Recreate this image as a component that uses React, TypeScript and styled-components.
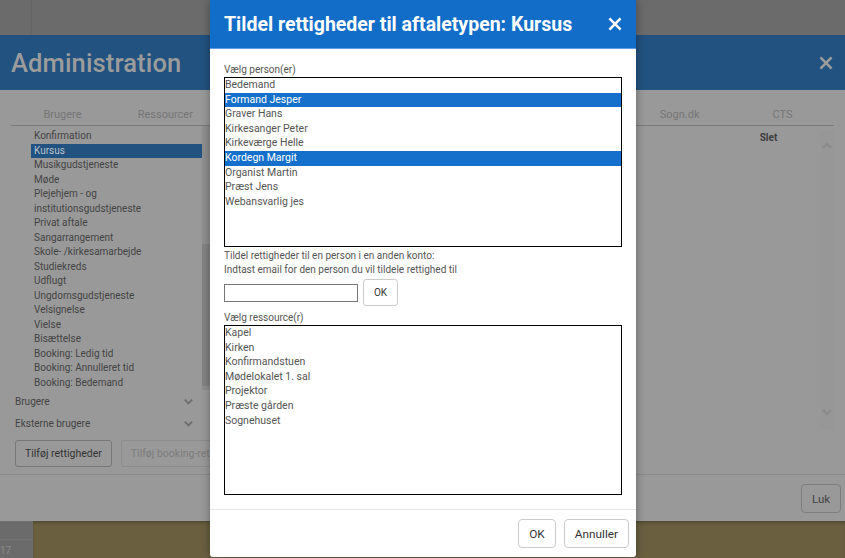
import React from "react";
import styled, { createGlobalStyle } from "styled-components";

const GlobalStyle = createGlobalStyle`
  html, body { margin: 0; padding: 0; }
  body {
    font-family: Roboto, "Liberation Sans", Arial, sans-serif;
    background: #6b6b6b;
  }
  * { box-sizing: border-box; }
`;

const S = {
  Page: styled.div`
    position: relative;
    width: 845px;
    height: 558px;
    overflow: hidden;
    display: flex;
    flex-direction: column;
    background: #6b6b6b;
  `,
  TopBar: styled.div`
    height: 35px;
    flex: none;
    display: flex;
  `,
  TopCell: styled.div`
    width: 32px;
    border-right: 1px solid #656565;
  `,
  Admin: styled.section`
    height: 486px;
    flex: none;
    display: flex;
    flex-direction: column;
    background: #999999;
  `,
  AdminHeader: styled.header`
    height: 55px;
    flex: none;
    display: flex;
    align-items: center;
    justify-content: space-between;
    padding: 0 12px 0 11px;
    background: #22527f;
  `,
  AdminTitle: styled.h1`
    margin: 0;
    font-size: 25.5px;
    font-weight: 500;
    color: #9c9c9c;
    letter-spacing: 0.15px;
  `,
  AdminBody: styled.div`
    flex: 1;
    display: flex;
    flex-direction: column;
    padding: 15px 11px 0;
  `,
  Tabs: styled.nav`
    display: grid;
    grid-template-columns: repeat(8, 1fr);
    height: 21px;
    border-bottom: 1px solid #7a7a7a;
  `,
  Tab: styled.div`
    text-align: center;
    font-size: 11px;
    line-height: 20px;
    color: #767676;
  `,
  Content: styled.div`
    display: flex;
    height: 308px;
  `,
  TypeColumn: styled.div`
    width: 199px;
    display: flex;
    flex-direction: column;
  `,
  TypeScroll: styled.div`
    display: flex;
    height: 266px;
  `,
  TypeList: styled.ul`
    list-style: none;
    margin: 0;
    padding: 3px 0 0 20px;
    flex: 1;
    overflow: hidden;
  `,
  TypeItem: styled.li<{ $active?: boolean }>`
    font-size: 10px;
    line-height: 14.5px;
    padding-left: 3px;
    color: ${(p) => (p.$active ? "#b9c3cd" : "#444")};
    background: ${(p) => (p.$active ? "#22527f" : "transparent")};
    white-space: nowrap;
  `,
  ScrollTrack: styled.div`
    width: 8px;
    background: #8f8f8f;
    display: flex;
    flex-direction: column;
    padding-top: 118px;
  `,
  ScrollThumb: styled.div`
    height: 142px;
    background: #848484;
  `,
  Group: styled.div`
    display: flex;
    align-items: center;
    justify-content: space-between;
    height: 22px;
    padding: 0 16px 0 4px;
    font-size: 10px;
    color: #444;
  `,
  RightArea: styled.div`
    flex: 1;
    display: flex;
    justify-content: flex-end;
    padding-top: 4px;
  `,
  SletCol: styled.div`
    width: 103px;
    text-align: center;
    font-size: 10px;
    font-weight: 700;
    color: #3d3d3d;
    padding-top: 2px;
  `,
  SideScroll: styled.div`
    width: 14px;
    height: 300px;
    background: #979797;
    display: flex;
    flex-direction: column;
    justify-content: space-between;
    align-items: center;
    padding: 10px 0 12px;
    color: #888;
  `,
  ButtonRow: styled.div`
    display: flex;
    gap: 9px;
    padding: 6px 0 0 4px;
    height: 40px;
  `,
  GhostButton: styled.button<{ $disabled?: boolean }>`
    height: 27px;
    padding: 0 9px;
    font-family: inherit;
    font-size: 10.5px;
    border-radius: 3px;
    background: #999;
    color: ${(p) => (p.$disabled ? "#7c7c7c" : "#333")};
    border: 1px solid ${(p) => (p.$disabled ? "#8c8c8c" : "#777")};
    white-space: nowrap;
  `,
  AdminFooter: styled.footer`
    border-top: 1px solid #8a8a8a;
    display: flex;
    justify-content: flex-end;
    padding: 9px 4px 0 0;
    flex: 1;
  `,
  LukButton: styled.button`
    width: 40px;
    height: 29px;
    font-family: inherit;
    font-size: 11.5px;
    color: #444;
    background: #999;
    border: 1px solid #7e7e7e;
    border-radius: 4px;
  `,
  Bottom: styled.div`
    flex: 1;
    display: flex;
  `,
  DayCell: styled.div`
    width: 33px;
    background: #6b6b6b;
    border-top: 1px solid #707070;
    display: flex;
    flex-direction: column;
    justify-content: flex-end;
  `,
  DayNum: styled.div`
    border-top: 1px solid #747474;
    height: 19px;
    font-size: 10px;
    color: #8a8a8a;
    padding-top: 5px;
  `,
  Olive: styled.div`
    flex: 1;
    background: #6a6040;
    box-shadow: inset 0 3px 4px -2px rgba(0, 0, 0, 0.35);
  `,
  Dialog: styled.div`
    position: absolute;
    left: 210px;
    top: 0;
    width: 426px;
    height: 557px;
    background: #fff;
    display: flex;
    flex-direction: column;
    box-shadow: 0 0 10px rgba(0, 0, 0, 0.35);
    border-radius: 0 0 3px 3px;
  `,
  DialogHeader: styled.header`
    height: 49px;
    flex: none;
    background: #126dc8;
    border-bottom: 1px solid #5f9be0;
    display: flex;
    align-items: center;
    justify-content: space-between;
    padding: 0 14px 0 14px;
  `,
  DialogTitle: styled.h2`
    margin: 0;
    font-size: 19.5px;
    font-weight: 700;
    color: #fff;
  `,
  DialogBody: styled.div`
    flex: 1;
    padding: 14px 14px 0;
    display: flex;
    flex-direction: column;
  `,
  Label: styled.div`
    font-size: 10px;
    line-height: 14px;
    color: #555;
  `,
  ListBox: styled.ul`
    list-style: none;
    margin: 0;
    padding: 0;
    width: 398px;
    height: 170px;
    border: 1px solid #000;
    overflow: hidden;
  `,
  Option: styled.li<{ $selected?: boolean }>`
    height: 14.6px;
    line-height: 14.6px;
    font-size: 10.5px;
    color: ${(p) => (p.$selected ? "#fff" : "#555")};
    background: ${(p) => (p.$selected ? "#1470ca" : "transparent")};
    white-space: nowrap;
    overflow: hidden;
  `,
  Hint: styled.div`
    font-size: 10px;
    line-height: 13.5px;
    color: #555;
    margin-top: 2px;
  `,
  EmailRow: styled.div`
    display: flex;
    align-items: center;
    gap: 5px;
    margin: 3px 0 5px;
  `,
  EmailInput: styled.input`
    width: 134px;
    height: 18px;
    border: 1px solid #767676;
    padding: 0 3px;
    font-family: inherit;
  `,
  SmallButton: styled.button`
    width: 35px;
    height: 27px;
    font-family: inherit;
    font-size: 10px;
    color: #333;
    background: #fff;
    border: 1px solid #ccc;
    border-radius: 3px;
  `,
  DialogFooter: styled.footer`
    height: 48px;
    flex: none;
    border-top: 1px solid #e5e5e5;
    display: flex;
    justify-content: flex-end;
    align-items: center;
    gap: 8px;
    padding: 0 7px 0 0;
  `,
  FooterButton: styled.button`
    height: 29px;
    padding: 0 10px;
    font-family: inherit;
    font-size: 11.8px;
    color: #333;
    background: #fff;
    border: 1px solid #ccc;
    border-radius: 4px;
  `,
};

const Chevron = ({ up = false, color = "#777", size = 12 }: { up?: boolean; color?: string; size?: number }) => (
  <svg width={size} height={size} viewBox="0 0 12 12">
    <path
      d={up ? "M2 8 L6 4 L10 8" : "M2 4 L6 8 L10 4"}
      fill="none"
      stroke={color}
      strokeWidth="2"
    />
  </svg>
);

const CloseIcon = ({ color, size }: { color: string; size: number }) => (
  <svg width={size} height={size} viewBox="0 0 12 12">
    <path d="M2 2 L10 10 M10 2 L2 10" stroke={color} strokeWidth="2.2" strokeLinecap="square" />
  </svg>
);

const tabs = ["Brugere", "Ressourcer", "Kalender", "Visning", "Skabeloner", "Kirkebogen", "Sogn.dk", "CTS"];

const types = [
  "Konfirmation",
  "Kursus",
  "Musikgudstjeneste",
  "Møde",
  "Plejehjem - og",
  "institutionsgudstjeneste",
  "Privat aftale",
  "Sangarrangement",
  "Skole- /kirkesamarbejde",
  "Studiekreds",
  "Udflugt",
  "Ungdomsgudstjeneste",
  "Velsignelse",
  "Vielse",
  "Bisættelse",
  "Booking: Ledig tid",
  "Booking: Annulleret tid",
  "Booking: Bedemand",
];

const persons = [
  { name: "Bedemand" },
  { name: "Formand Jesper", selected: true },
  { name: "Graver Hans" },
  { name: "Kirkesanger Peter" },
  { name: "Kirkeværge Helle" },
  { name: "Kordegn Margit", selected: true },
  { name: "Organist Martin" },
  { name: "Præst Jens" },
  { name: "Webansvarlig jes" },
];

const resources = [
  "Kapel",
  "Kirken",
  "Konfirmandstuen",
  "Mødelokalet 1. sal",
  "Projektor",
  "Præste gården",
  "Sognehuset",
];

export default function App() {
  return (
    <>
      <GlobalStyle />
      <S.Page>
        <S.TopBar>
          <S.TopCell />
        </S.TopBar>

        <S.Admin>
          <S.AdminHeader>
            <S.AdminTitle>Administration</S.AdminTitle>
            <CloseIcon color="#9c9c9c" size={14} />
          </S.AdminHeader>
          <S.AdminBody>
            <S.Tabs>
              {tabs.map((t) => (
                <S.Tab key={t}>{t}</S.Tab>
              ))}
            </S.Tabs>
            <S.Content>
              <S.TypeColumn>
                <S.TypeScroll>
                  <S.TypeList>
                    {types.map((t) => (
                      <S.TypeItem key={t} $active={t === "Kursus"}>
                        {t}
                      </S.TypeItem>
                    ))}
                  </S.TypeList>
                  <S.ScrollTrack>
                    <S.ScrollThumb />
                  </S.ScrollTrack>
                </S.TypeScroll>
                <S.Group>
                  Brugere
                  <Chevron color="#6e6e6e" size={11} />
                </S.Group>
                <S.Group>
                  Eksterne brugere
                  <Chevron color="#6e6e6e" size={11} />
                </S.Group>
              </S.TypeColumn>
              <S.RightArea>
                <S.SletCol>Slet</S.SletCol>
                <S.SideScroll>
                  <Chevron up color="#8a8a8a" size={12} />
                  <Chevron color="#8a8a8a" size={12} />
                </S.SideScroll>
              </S.RightArea>
            </S.Content>
            <S.ButtonRow>
              <S.GhostButton>Tilføj rettigheder</S.GhostButton>
              <S.GhostButton $disabled>Tilføj booking-rettigheder</S.GhostButton>
            </S.ButtonRow>
          </S.AdminBody>
          <S.AdminFooter>
            <S.LukButton>Luk</S.LukButton>
          </S.AdminFooter>
        </S.Admin>

        <S.Bottom>
          <S.DayCell>
            <S.DayNum>17</S.DayNum>
          </S.DayCell>
          <S.Olive />
        </S.Bottom>

        <S.Dialog>
          <S.DialogHeader>
            <S.DialogTitle>Tildel rettigheder til aftaletypen: Kursus</S.DialogTitle>
            <CloseIcon color="#fff" size={14} />
          </S.DialogHeader>
          <S.DialogBody>
            <S.Label>Vælg person(er)</S.Label>
            <S.ListBox>
              {persons.map((p) => (
                <S.Option key={p.name} $selected={p.selected}>
                  {p.name}
                </S.Option>
              ))}
            </S.ListBox>
            <S.Hint>
              Tildel rettigheder til en person i en anden konto:
              <br />
              Indtast email for den person du vil tildele rettighed til
            </S.Hint>
            <S.EmailRow>
              <S.EmailInput />
              <S.SmallButton>OK</S.SmallButton>
            </S.EmailRow>
            <S.Label>Vælg ressource(r)</S.Label>
            <S.ListBox>
              {resources.map((r) => (
                <S.Option key={r}>{r}</S.Option>
              ))}
            </S.ListBox>
          </S.DialogBody>
          <S.DialogFooter>
            <S.FooterButton>OK</S.FooterButton>
            <S.FooterButton>Annuller</S.FooterButton>
          </S.DialogFooter>
        </S.Dialog>
      </S.Page>
    </>
  );
}
